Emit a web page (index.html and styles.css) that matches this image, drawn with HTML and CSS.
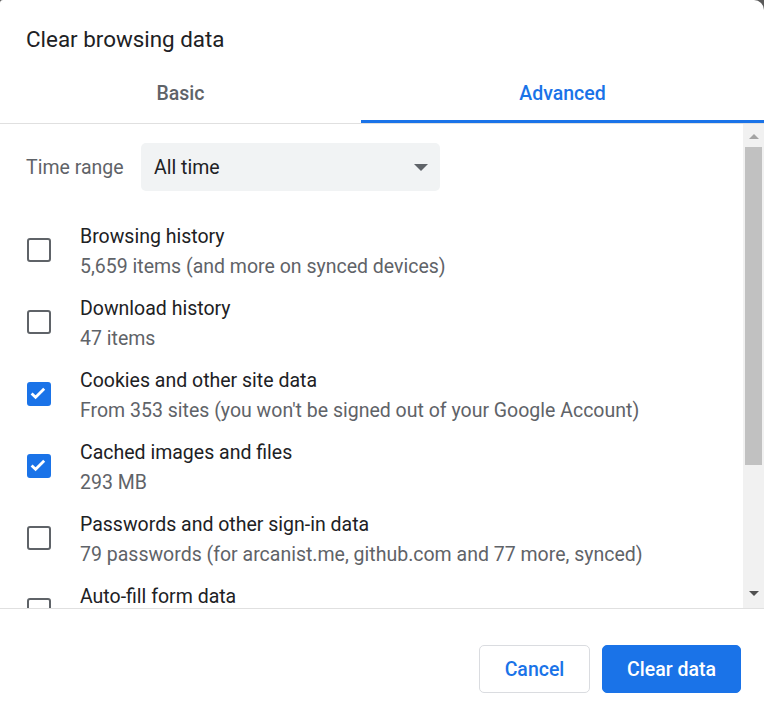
FILE: index.html
```html
<!DOCTYPE html>
<html>
<head>
<meta charset="utf-8">
<link rel="stylesheet" href="styles.css">
</head>
<body>
<div class="dialog">
  <div class="title">Clear browsing data</div>
  <div class="tabs">
    <div class="tab">Basic</div>
    <div class="tab active">Advanced</div>
  </div>
  <div class="body">
    <div class="scroll">
      <div class="time-row">
        <span class="label">Time range</span>
        <div class="select"><span>All time</span><span class="arrow"></span></div>
      </div>
      <div class="item">
        <span class="cb"></span>
        <div class="text"><div class="main">Browsing history</div><div class="sub">5,659 items (and more on synced devices)</div></div>
      </div>
      <div class="item">
        <span class="cb"></span>
        <div class="text"><div class="main">Download history</div><div class="sub">47 items</div></div>
      </div>
      <div class="item">
        <span class="cb checked"><svg viewBox="0 0 24 24"><path d="M5.6 12.4 L9.6 16.2 L18.2 7.8" fill="none" stroke="#fff" stroke-width="2.8"/></svg></span>
        <div class="text"><div class="main">Cookies and other site data</div><div class="sub">From 353 sites (you won't be signed out of your Google Account)</div></div>
      </div>
      <div class="item">
        <span class="cb checked"><svg viewBox="0 0 24 24"><path d="M5.6 12.4 L9.6 16.2 L18.2 7.8" fill="none" stroke="#fff" stroke-width="2.8"/></svg></span>
        <div class="text"><div class="main">Cached images and files</div><div class="sub">293 MB</div></div>
      </div>
      <div class="item">
        <span class="cb"></span>
        <div class="text"><div class="main">Passwords and other sign-in data</div><div class="sub">79 passwords (for arcanist.me, github.com and 77 more, synced)</div></div>
      </div>
      <div class="item">
        <span class="cb"></span>
        <div class="text"><div class="main">Auto-fill form data</div><div class="sub">&nbsp;</div></div>
      </div>
    </div>
    <div class="scrollbar">
      <div class="sb-btn"><span class="up"></span></div>
      <div class="sb-thumb"></div>
      <div class="sb-btn down-btn"><span class="down"></span></div>
    </div>
  </div>
  <div class="footer">
    <button class="btn cancel">Cancel</button>
    <button class="btn primary">Clear data</button>
  </div>
</div>
</body>
</html>
```

FILE: styles.css
```css
html, body {
  margin: 0;
  padding: 0;
  width: 764px;
  height: 715px;
  overflow: hidden;
  background: #5a5a5a;
}
.dialog {
  width: 764px;
  height: 715px;
  background: #fff;
  border-radius: 3px 10px 0 0;
  font-family: Roboto, "Liberation Sans", sans-serif;
  font-size: 19.5px;
  color: #202124;
  display: flex;
  flex-direction: column;
  overflow: hidden;
}
.title {
  height: 64px;
  box-sizing: border-box;
  padding: 26px 0 0 26px;
  font-size: 22.4px;
  line-height: 26px;
  color: #202124;
}
.tabs {
  display: flex;
  height: 60px;
  box-sizing: border-box;
  border-bottom: 1px solid #e0e0e0;
}
.tab {
  box-sizing: border-box;
  display: flex;
  align-items: center;
  justify-content: center;
  font-weight: 500;
  color: #5f6368;
  border-bottom: 3px solid transparent;
  padding-top: 3px;
}
.tab:first-child { width: 361px; }
.tab.active { flex: 1; color: #1a73e8; border-bottom-color: #1a73e8; }
.body {
  height: 485px;
  box-sizing: border-box;
  border-bottom: 1px solid #e0e0e0;
  display: flex;
}
.scroll {
  flex: 1;
  overflow: hidden;
  padding-top: 19px;
}
.time-row {
  display: flex;
  align-items: center;
  padding-left: 26px;
  height: 48px;
}
.label {
  color: #5f6368;
  width: 115px;
}
.select {
  width: 299px;
  height: 48px;
  box-sizing: border-box;
  background: #f1f3f4;
  border-radius: 5px;
  display: flex;
  align-items: center;
  justify-content: space-between;
  padding: 0 12px 0 13px;
}
.arrow {
  width: 0;
  height: 0;
  border-left: 7px solid transparent;
  border-right: 7px solid transparent;
  border-top: 7px solid #5f6368;
}
.item {
  display: flex;
  align-items: center;
  height: 72px;
  padding-left: 27px;
}
.time-row + .item { margin-top: 23px; }
.cb {
  width: 24px;
  height: 24px;
  box-sizing: border-box;
  border: 2.7px solid #5f6368;
  border-radius: 3px;
  flex-shrink: 0;
  margin-right: 29px;
  display: flex;
}
.cb.checked {
  background: #1a73e8;
  border-color: #1a73e8;
}
.cb svg {
  width: 24px;
  height: 24px;
  margin: -2.7px;
}
.text { line-height: 30px; padding-top: 3px; }
.sub { color: #5f6368; }
.scrollbar {
  width: 21px;
  background: #f1f1f1;
  display: flex;
  flex-direction: column;
  align-items: center;
}
.sb-btn {
  height: 21px;
  width: 100%;
  display: flex;
  align-items: center;
  justify-content: center;
}
.sb-btn.down-btn { margin-top: auto; height: 26px; padding-bottom: 2px; }
.up {
  width: 0; height: 0;
  border-left: 5px solid transparent;
  border-right: 5px solid transparent;
  border-bottom: 5px solid #a3a3a3;
  margin-top: 3px;
}
.down {
  width: 0; height: 0;
  border-left: 5px solid transparent;
  border-right: 5px solid transparent;
  border-top: 5px solid #505050;
}
.sb-thumb {
  width: 17px;
  height: 318px;
  margin-top: 2px;
  background: #c1c1c1;
}
.footer {
  flex: 1;
  display: flex;
  justify-content: flex-end;
  align-items: flex-start;
  gap: 12px;
  padding: 36px 23px 0 0;
}
.btn {
  font-family: Roboto, "Liberation Sans", sans-serif;
  font-size: 19.5px;
  font-weight: 500;
  height: 48px;
  border-radius: 5px;
  cursor: pointer;
}
.cancel {
  width: 111px;
  background: #fff;
  color: #1a73e8;
  border: 1px solid #dadce0;
}
.primary {
  width: 139px;
  background: #1a73e8;
  color: #fff;
  border: 1px solid #1a73e8;
}
```
